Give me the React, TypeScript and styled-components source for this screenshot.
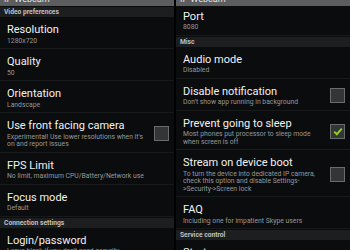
import React from "react";
import styled, { createGlobalStyle } from "styled-components";

const Global = createGlobalStyle`
  html, body { margin: 0; padding: 0; background: #000; }
  body { width: 350px; height: 250px; overflow: hidden; font-family: Roboto, "Noto Sans", sans-serif; }
`;

const Screen = styled.div`
  display: flex;
  width: 350px;
  height: 250px;
  gap: 2px;
  background: #000;
`;

const Panel = styled.div`
  flex: 1;
  min-width: 0;
  display: flex;
  flex-direction: column;
  background: #0b0c0d;
  overflow: hidden;
`;

const TitleBar = styled.div`
  height: 6px;
  flex: none;
  background: #5c5d5e;
  display: flex;
  align-items: flex-end;
  padding-left: 4px;
  overflow: hidden;
`;

const TitleText = styled.span`
  font-size: 9px;
  line-height: 10px;
  color: #e8e8e8;
  margin-bottom: 2px;
`;

const Viewport = styled.div`
  flex: 1;
  overflow: hidden;
`;

const List = styled.div<{ $scroll: number }>`
  display: flex;
  flex-direction: column;
  margin-top: ${(p) => -p.$scroll}px;
`;

const Header = styled.div`
  background: #1d1e20;
  color: #c0c0c0;
  font-size: 6.7px;
  font-weight: bold;
  height: 10px;
  line-height: 10px;
  padding-left: 4px;
  margin-top: 1px;
`;

const Row = styled.div`
  display: flex;
  align-items: center;
  gap: 3px;
  padding: 6px 5px 3px 7px;
  border-bottom: 1px solid #17191a;
  &:last-child { border-bottom: none; }
`;

const Texts = styled.div`
  flex: 1;
  display: flex;
  flex-direction: column;
  gap: 1.5px;
  min-width: 0;
`;

const Title = styled.div`
  font-size: 11px;
  line-height: 13px;
  color: #f2f2f2;
  white-space: nowrap;
`;

const Sub = styled.div`
  font-size: 6.8px;
  line-height: 7.5px;
  color: #989898;
`;

const Box = styled.div`
  flex: none;
  width: 13px;
  height: 13px;
  border: 1px solid #6a6b6c;
  background: #333537;
  display: flex;
  align-items: center;
  justify-content: center;
`;

type Item = {
  title?: string;
  sub?: string;
  check?: "on" | "off";
  header?: string;
};

const left: Item[] = [
  { header: "Video preferences" },
  { title: "Resolution", sub: "1280x720" },
  { title: "Quality", sub: "50" },
  { title: "Orientation", sub: "Landscape" },
  {
    title: "Use front facing camera",
    sub: "Experimental! Use lower resolutions when it's on and report issues",
    check: "off",
  },
  { title: "FPS Limit", sub: "No limit, maximum CPU/Battery/Network use" },
  { title: "Focus mode", sub: "Default" },
  { header: "Connection settings" },
  { title: "Login/password", sub: "Leave blank if you don't need security" },
];

const right: Item[] = [
  { title: "Port", sub: "8080" },
  { header: "Misc" },
  { title: "Audio mode", sub: "Disabled" },
  { title: "Disable notification", sub: "Don't show app running in background", check: "off" },
  {
    title: "Prevent going to sleep",
    sub: "Most phones put processor to sleep mode when screen is off",
    check: "on",
  },
  {
    title: "Stream on device boot",
    sub: "To turn the device into dedicated IP camera, check this option and disable Settings-\u200B>Security->Screen lock",
    check: "off",
  },
  { title: "FAQ", sub: "Including one for impatient Skype users" },
  { header: "Service control" },
  { title: "Start server" },
];

const Check = () => (
  <svg width="10" height="9" viewBox="0 0 10 9">
    <path d="M1.2 4.6 L3.8 7.2 L8.8 1.6" fill="none" stroke="#8ccf1c" strokeWidth="2" />
  </svg>
);

const Pref = ({ it }: { it: Item }) =>
  it.header ? (
    <Header>{it.header}</Header>
  ) : (
    <Row>
      <Texts>
        <Title>{it.title}</Title>
        {it.sub && <Sub>{it.sub}</Sub>}
      </Texts>
      {it.check && <Box>{it.check === "on" && <Check />}</Box>}
    </Row>
  );

export default function App() {
  return (
    <>
      <Global />
      <Screen>
        <Panel>
          <TitleBar>
            <TitleText>IP Webcam</TitleText>
          </TitleBar>
          <Viewport>
            <List $scroll={0}>
              {left.map((it, i) => (
                <Pref key={i} it={it} />
              ))}
            </List>
          </Viewport>
        </Panel>
        <Panel>
          <TitleBar>
            <TitleText>IP Webcam</TitleText>
          </TitleBar>
          <Viewport>
            <List $scroll={2.5}>
              {right.map((it, i) => (
                <Pref key={i} it={it} />
              ))}
            </List>
          </Viewport>
        </Panel>
      </Screen>
    </>
  );
}
